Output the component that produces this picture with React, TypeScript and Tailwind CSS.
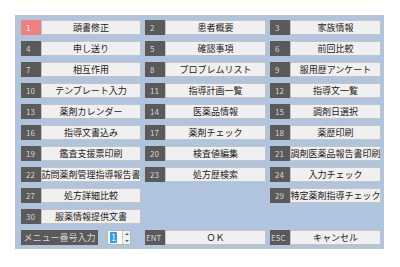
import React from "react";

type Cell = { n: string; label: string; hot?: boolean; wide?: boolean } | null;

const rows: Cell[][] = [
  [{ n: "1", label: "頭書修正", hot: true }, { n: "2", label: "患者概要" }, { n: "3", label: "家族情報" }],
  [{ n: "4", label: "申し送り" }, { n: "5", label: "確認事項" }, { n: "6", label: "前回比較" }],
  [{ n: "7", label: "相互作用" }, { n: "8", label: "プロブレムリスト" }, { n: "9", label: "服用歴アンケート" }],
  [{ n: "10", label: "テンプレート入力" }, { n: "11", label: "指導計画一覧" }, { n: "12", label: "指導文一覧" }],
  [{ n: "13", label: "薬剤カレンダー" }, { n: "14", label: "医薬品情報" }, { n: "15", label: "調剤日選択" }],
  [{ n: "16", label: "指導文書込み" }, { n: "17", label: "薬剤チェック" }, { n: "18", label: "薬歴印刷" }],
  [{ n: "19", label: "鑑査支援票印刷" }, { n: "20", label: "検査値編集" }, { n: "21", label: "調剤医薬品報告書印刷" }],
  [{ n: "22", label: "訪問薬剤管理指導報告書" }, { n: "23", label: "処方歴検索" }, { n: "24", label: "入力チェック" }],
  [{ n: "27", label: "処方詳細比較" }, null, { n: "29", label: "特定薬剤指導チェック" }],
  [{ n: "30", label: "服薬情報提供文書" }, null, null],
];

function Btn({ c }: { c: Cell }) {
  if (!c) return <div className="h-[15px]" />;
  return (
    <div className="flex h-[15px]">
      <div
        className={`w-[20px] shrink-0 text-[8px] leading-[15px] whitespace-nowrap overflow-hidden ${
          c.wide ? "pl-[1px]" : "pl-[5px]"
        } ${c.hot ? "bg-[#f08080] text-white" : "bg-[#5a5a5a] text-[#d4d4d4]"}`}
      >
        {c.n}
      </div>
      <div className="flex-1 min-w-0 bg-[#f0f0f0] border border-[#c4c4c4] flex items-center justify-center text-[9px] leading-none text-[#202020] whitespace-nowrap overflow-hidden">
        {c.label}
      </div>
    </div>
  );
}

export default function App() {
  return (
    <div
      className="w-[400px] h-[267px] bg-white pt-[15px] pl-[15px]"
      style={{ fontFamily: '"Noto Sans CJK JP", "Noto Sans", sans-serif' }}
    >
      <div className="w-[369px] bg-[#b0c4de] pt-[5px] pl-[6px] pb-[4px] flex flex-col gap-[6px]">
        {rows.map((r, i) => (
          <div key={i} className="grid grid-cols-[120px_121px_111px] gap-x-[4px]">
            {r.map((c, j) => (
              <Btn key={j} c={c} />
            ))}
          </div>
        ))}
        <div className="grid grid-cols-[120px_121px_111px] gap-x-[4px]">
          <div className="flex h-[15px] items-center">
            <div className="w-[77px] h-[15px] bg-[#5a5a5a] text-[#d4d4d4] text-[9px] leading-[15px] text-center whitespace-nowrap">
              メニュー番号入力
            </div>
            <div className="ml-[9px] w-[24px] h-[15px] bg-white border border-[#b8b8b8] flex items-center">
              <span className="ml-[2px] bg-[#3399ff] text-white text-[9px] leading-[11px] px-[1px]">1</span>
              <div className="ml-auto w-[8px] h-full border-l border-[#c8c8c8] bg-[#f0f0f0] flex flex-col items-center justify-around">
                <div className="w-0 h-0 border-l-[2px] border-r-[2px] border-b-[2px] border-l-transparent border-r-transparent border-b-[#606060]" />
                <div className="w-0 h-0 border-l-[2px] border-r-[2px] border-t-[2px] border-l-transparent border-r-transparent border-t-[#606060]" />
              </div>
            </div>
          </div>
          <Btn c={{ n: "ENT", label: "ＯＫ", wide: true }} />
          <Btn c={{ n: "ESC", label: "キャンセル", wide: true }} />
        </div>
      </div>
    </div>
  );
}
